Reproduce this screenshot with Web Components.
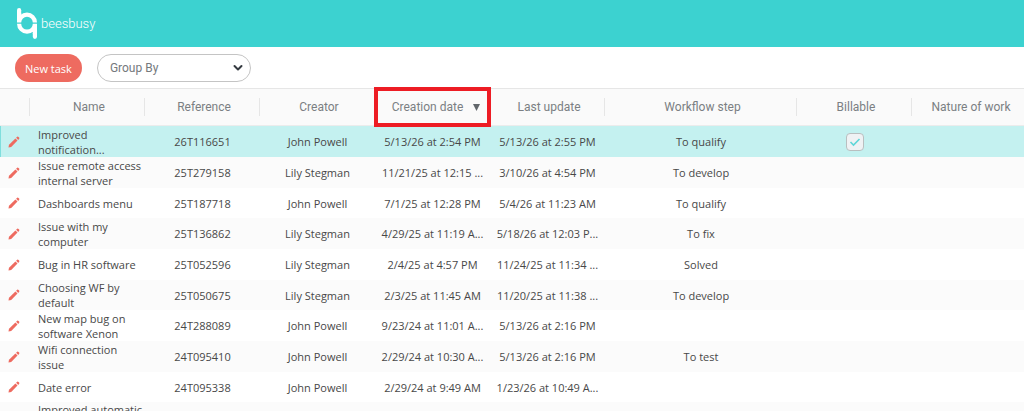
<!DOCTYPE html>
<html lang="en">
<head>
  <meta charset="utf-8">
  <meta name="viewport" content="width=device-width, initial-scale=1">
  <title>Beesbusy - Tasks</title>
  <style>
    body {
      margin: 0;
      height: 100vh;
      overflow: hidden;
      background: #fff;
      color: #484848;
      font-family: "Open Sans", "Noto Sans", sans-serif;
      font-size: 11px;
      line-height: 15px;
    }
  </style>
</head>
<body>
  <app-header>beesbusy</app-header>
  <tool-bar>
    <pill-button>New task</pill-button>
    <group-select label="Group By"></group-select>
  </tool-bar>
  <task-table></task-table>

  <script>
    class AppHeader extends HTMLElement {
      constructor() {
        super();
        const shadow = this.attachShadow({ mode: 'open' });
        shadow.innerHTML = `
        <style>
          :host {
            display: block;
            background: #3cd2d0;
            color: #fff;
          }

          header {
            display: flex;
            align-items: center;
            height: 47px;
            padding: 0 16px;
          }

          a {
            display: flex;
            align-items: center;
            gap: 3px;
            color: inherit;
            text-decoration: none;
            font-family: "Roboto", sans-serif;
            font-size: 13px;
            font-weight: 300;
            line-height: 20px;
          }
        </style>
        <header>
          <a href="#">
            <svg width="22" height="32" viewBox="0 0 22 32" fill="none" stroke="#fff" stroke-width="4.2" aria-hidden="true">
              <path d="M3.1 2.2V6" stroke-linecap="round"/>
              <path d="M3.1 5V14.600A7.900 7.900 0 0 1 18.900 14.600"/>
              <path d="M3.1 15.800A7.900 7.900 0 0 0 18.900 15.800V26"/>
              <path d="M18.900 25V28.800" stroke-linecap="round"/>
            </svg>
            <slot></slot>
          </a>
        </header>
      `;
      }
    }

    class ToolBar extends HTMLElement {
      constructor() {
        super();
        const shadow = this.attachShadow({ mode: 'open' });
        shadow.innerHTML = `
        <style>
          :host {
            display: flex;
            align-items: center;
            gap: 15px;
            padding: 7px 15px 6px;
          }
        </style>
        <slot></slot>
      `;
      }
    }

    class PillButton extends HTMLElement {
      constructor() {
        super();
        const shadow = this.attachShadow({ mode: 'open' });
        shadow.innerHTML = `
        <style>
          :host {
            display: block;
          }

          button {
            height: 28px;
            padding: 0 10px;
            border: none;
            border-radius: 14px;
            background: #ee6b60;
            color: #fff;
            font: inherit;
            font-weight: 500;
            cursor: pointer;
          }

          button:hover {
            background: #e05b50;
          }
        </style>
        <button type="button"><slot></slot></button>
      `;
      }
    }

    class GroupSelect extends HTMLElement {
      constructor() {
        super();
        const label = this.getAttribute('label');
        const shadow = this.attachShadow({ mode: 'open' });
        shadow.innerHTML = `
        <style>
          :host {
            display: grid;
            align-items: center;
            width: 154px;
          }

          select, svg {
            grid-area: 1 / 1;
          }

          select {
            appearance: none;
            box-sizing: border-box;
            width: 100%;
            height: 28px;
            padding: 0 12px;
            border: 1px solid #c4c4c4;
            border-radius: 14px;
            background: #fff;
            color: #75797d;
            font-family: "Roboto", sans-serif;
            font-size: 12px;
          }

          svg {
            justify-self: end;
            margin-right: 8px;
            pointer-events: none;
          }
        </style>
        <select aria-label="${label}">
          <option>${label}</option>
        </select>
        <svg width="10" height="8" viewBox="0 0 10 8" fill="none" stroke="#343a40" stroke-width="2" stroke-linecap="round" stroke-linejoin="round" aria-hidden="true">
          <path d="M1.500 2L5 5.500L8.500 2"/>
        </svg>
      `;
      }
    }

    class EditButton extends HTMLElement {
      constructor() {
        super();
        const shadow = this.attachShadow({ mode: 'open' });
        shadow.innerHTML = `
        <style>
          :host {
            display: block;
          }

          button {
            display: block;
            padding: 0;
            border: none;
            background: none;
            cursor: pointer;
          }

          svg {
            display: block;
          }
        </style>
        <button type="button" aria-label="Edit task">
          <svg width="12" height="12" viewBox="0 0 12 12" fill="#ee6b60" aria-hidden="true">
            <path d="M.5 11.500L1 8.800L7.400 2.500L9.500 4.600L3.200 11Z"/>
            <path d="M8.100 1.800L9.200 .8Q9.900 .3 10.500 .9L11.100 1.500Q11.700 2.100 11.200 2.800L10.200 3.900Z"/>
          </svg>
        </button>
      `;
      }
    }

    class CheckBox extends HTMLElement {
      constructor() {
        super();
        const shadow = this.attachShadow({ mode: 'open' });
        shadow.innerHTML = `
        <style>
          :host {
            display: inline-grid;
            place-items: center;
            vertical-align: middle;
          }

          input, svg {
            grid-area: 1 / 1;
          }

          input {
            appearance: none;
            box-sizing: border-box;
            width: 18px;
            height: 18px;
            margin: 0;
            border: 1px solid #b9bfc0;
            border-radius: 4px;
            background: #eff2f4;
          }

          svg {
            pointer-events: none;
          }

          input:not(:checked) + svg {
            display: none;
          }
        </style>
        <input type="checkbox" aria-label="Billable" checked>
        <svg width="12" height="10" viewBox="0 0 12 10" fill="none" stroke="#5fd6d8" stroke-width="1.6" aria-hidden="true">
          <path d="M1.500 5L4.500 8L10.500 2"/>
        </svg>
      `;
      }
    }

    const COLUMNS = ['Name', 'Reference', 'Creator', 'Creation date', 'Last update', 'Workflow step', 'Billable', 'Nature of work'];

    const TASKS = [
      ['Improved notification...', '26T116651', 'John Powell', '5/13/26 at 2:54 PM', '5/13/26 at 2:55 PM', 'To qualify', true],
      ['Issue remote access internal server', '25T279158', 'Lily Stegman', '11/21/25 at 12:15 ...', '3/10/26 at 4:54 PM', 'To develop'],
      ['Dashboards menu', '25T187718', 'John Powell', '7/1/25 at 12:28 PM', '5/4/26 at 11:23 AM', 'To qualify'],
      ['Issue with my computer', '25T136862', 'Lily Stegman', '4/29/25 at 11:19 A...', '5/18/26 at 12:03 P...', 'To fix'],
      ['Bug in HR software', '25T052596', 'Lily Stegman', '2/4/25 at 4:57 PM', '11/24/25 at 11:34 ...', 'Solved'],
      ['Choosing WF by default', '25T050675', 'Lily Stegman', '2/3/25 at 11:45 AM', '11/20/25 at 11:38 ...', 'To develop'],
      ['New map bug on software Xenon', '24T288089', 'John Powell', '9/23/24 at 11:01 A...', '5/13/26 at 2:16 PM', ''],
      ['Wifi connection issue', '24T095410', 'John Powell', '2/29/24 at 10:30 A...', '5/13/26 at 2:16 PM', 'To test'],
      ['Date error', '24T095338', 'John Powell', '2/29/24 at 9:49 AM', '1/23/26 at 10:49 A...', ''],
      ['Improved automatic', '', '', '', '', '']
    ];

    class TaskTable extends HTMLElement {
      constructor() {
        super();
        const shadow = this.attachShadow({ mode: 'open' });
        shadow.innerHTML = `
        <style>
          :host {
            display: block;
            overflow-x: clip;
          }

          table {
            width: 100%;
            min-width: 1027px;
            table-layout: fixed;
            border-collapse: separate;
            border-spacing: 0;
          }

          .tools { width: 30px; }
          .field { width: 115px; }
          .step { width: 192px; }

          th, td {
            box-sizing: border-box;
            padding: 0;
            text-align: center;
            vertical-align: middle;
            white-space: nowrap;
          }

          th {
            height: 38px;
            border-top: 1px solid #e6e6e6;
            border-bottom: 1px solid #ececec;
            background: #fafafa;
            color: #7b7f83;
            font-family: "Roboto", sans-serif;
            font-size: 12px;
            font-weight: 400;
          }

          th > div {
            display: flex;
            align-items: center;
            justify-content: center;
            height: 18px;
            padding-left: 4px;
            border-right: 1px solid #e6e6e6;
          }

          th:last-child > div, th.open > div {
            border-right-color: transparent;
          }

          th button {
            display: flex;
            align-items: center;
            gap: 10px;
            padding: 0 0 0 4px;
            border: none;
            background: none;
            color: inherit;
            font: inherit;
          }

          th.sorted {
            outline: 4px solid #ed1c24;
            outline-offset: -3px;
          }

          tbody tr { height: 31px; }
          tbody tr:nth-child(3n) { height: 30px; }
          tbody tr:nth-child(even) { background: #fbfbfb; }
          tbody tr.selected { background: #c4f1f0; }
          tr.selected td:first-child { box-shadow: inset 1px 0 #7fdedd; }

          td:first-child { padding-left: 8px; }

          td:nth-child(2) {
            padding-left: 8px;
            text-align: left;
            white-space: normal;
          }

          tbody tr:last-child td:nth-child(2) {
            vertical-align: top;
          }
        </style>
        <table>
          <colgroup>
            <col class="tools">
            <col class="field" span="5">
            <col class="step">
            <col class="field">
            <col>
          </colgroup>
          <thead>
            <tr><th><div></div></th>${COLUMNS.map(name => this.heading(name)).join('')}</tr>
          </thead>
          <tbody>${TASKS.map((task, i) => this.row(task, i === 0)).join('')}</tbody>
        </table>
      `;
      }

      heading(name) {
        if (name !== 'Creation date') {
          return `<th scope="col"><div>${name}</div></th>`;
        }
        return `
          <th scope="col" class="sorted open" aria-sort="descending">
            <div>
              <button type="button">${name}
                <svg width="7" height="7" viewBox="0 0 7 7" fill="#62676b" aria-hidden="true"><path d="M0 0H7L3.500 7Z"/></svg>
              </button>
            </div>
          </th>`;
      }

      row(task, selected) {
        const [name, reference, creator, created, updated, step, billable] = task;
        return `
          <tr class="${selected ? 'selected' : ''}">
            <td><edit-button></edit-button></td>
            <td>${name}</td>
            <td>${reference}</td>
            <td>${creator}</td>
            <td>${created}</td>
            <td>${updated}</td>
            <td>${step}</td>
            <td>${billable ? '<check-box></check-box>' : ''}</td>
            <td></td>
          </tr>`;
      }
    }

    customElements.define('app-header', AppHeader);
    customElements.define('tool-bar', ToolBar);
    customElements.define('pill-button', PillButton);
    customElements.define('group-select', GroupSelect);
    customElements.define('edit-button', EditButton);
    customElements.define('check-box', CheckBox);
    customElements.define('task-table', TaskTable);
  </script>
</body>
</html>
